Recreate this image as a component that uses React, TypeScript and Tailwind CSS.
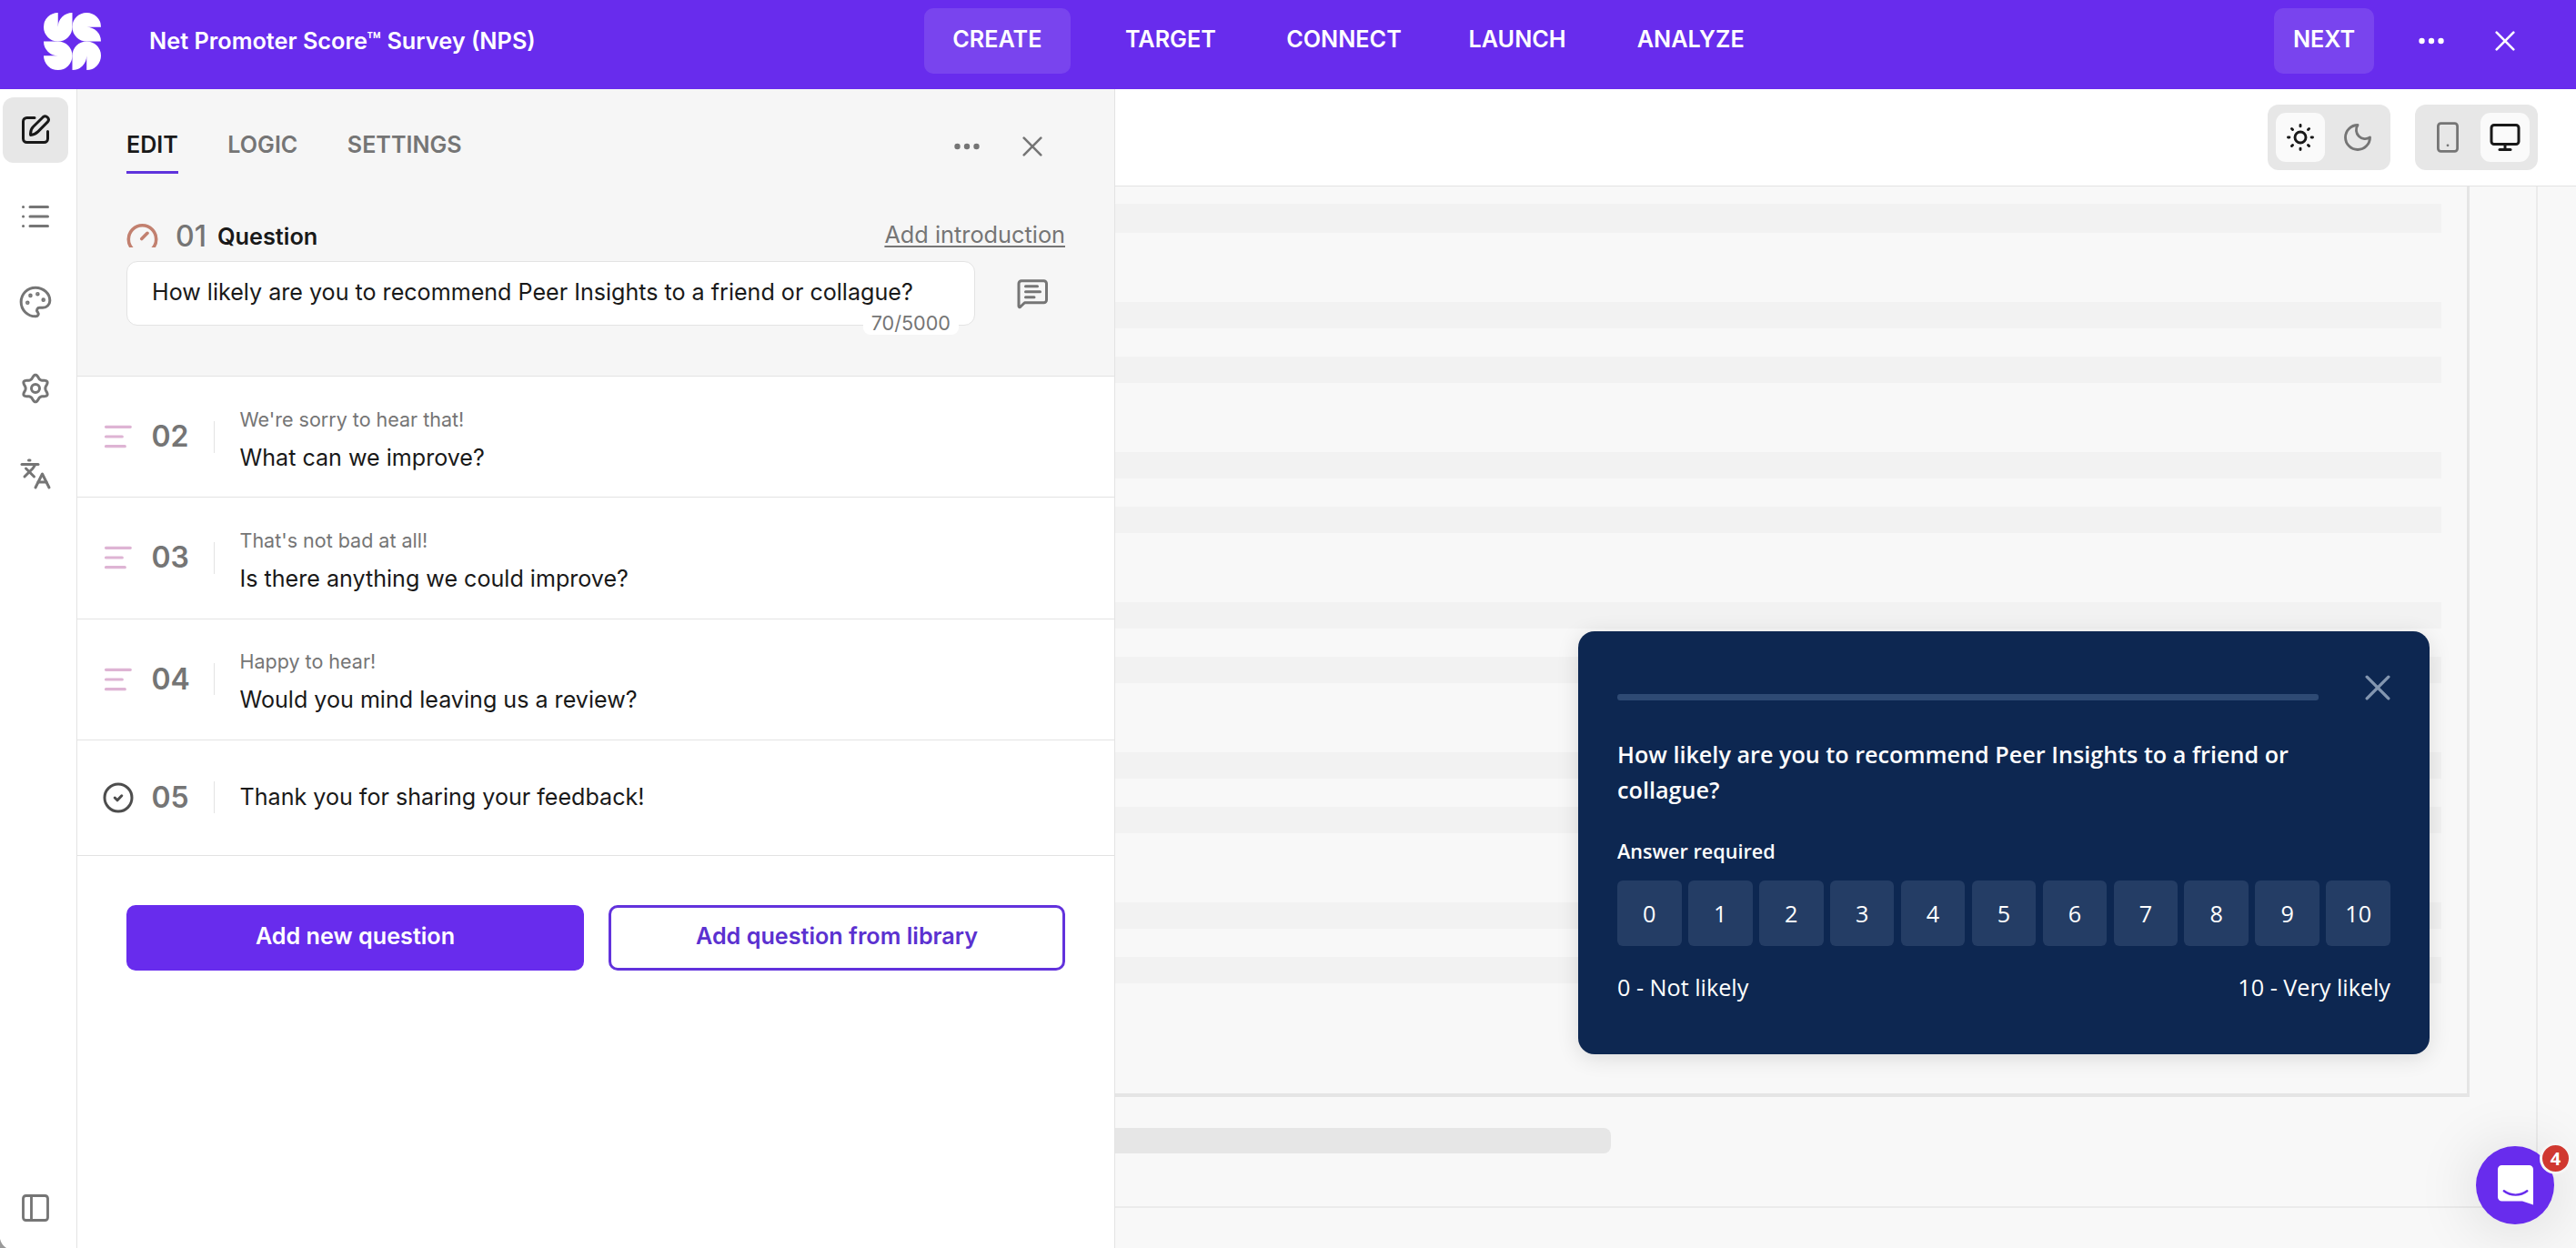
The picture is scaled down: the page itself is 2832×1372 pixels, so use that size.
import React, { useState } from 'react';
import { Languages, Monitor, Palette, PanelLeft } from 'lucide-react';
import clsx from 'clsx';

interface Question {
  id: string;
  intro?: string;
  title: string;
  kind: 'text' | 'end';
}

const questions: Question[] = [
  { id: '02', intro: "We're sorry to hear that!", title: 'What can we improve?', kind: 'text' },
  { id: '03', intro: "That's not bad at all!", title: 'Is there anything we could improve?', kind: 'text' },
  { id: '04', intro: 'Happy to hear!', title: 'Would you mind leaving us a review?', kind: 'text' },
  { id: '05', title: 'Thank you for sharing your feedback!', kind: 'end' },
];

const steps = ['CREATE', 'TARGET', 'CONNECT', 'LAUNCH', 'ANALYZE'];
const tabs = ['EDIT', 'LOGIC', 'SETTINGS'];
const scores = [0, 1, 2, 3, 4, 5, 6, 7, 8, 9, 10];

const petal = 'M16 0A16 16 0 0 0 0 16A16 16 0 0 0 16 32A16 16 0 0 0 32 16V0A16 16 0 0 0 16 16Z';

const Logo = () => (
  <svg className="h-[63px] w-[63px]" viewBox="0 0 64 64" fill="white">
    <path d={petal} />
    <path d={petal} transform="translate(64 0) rotate(90)" />
    <path d={petal} transform="translate(64 64) rotate(180)" />
    <path d={petal} transform="translate(0 64) rotate(270)" />
  </svg>
);

const Dots = ({ className }: { className?: string }) => (
  <svg className={clsx('h-[8px] w-[28px]', className)} viewBox="0 0 28 8" fill="currentColor">
    <circle cx="3.5" cy="4" r="3.2" />
    <circle cx="14" cy="4" r="3.2" />
    <circle cx="24.5" cy="4" r="3.2" />
  </svg>
);

const Cross = ({ className }: { className?: string }) => (
  <svg className={className} viewBox="0 0 22 22" fill="none" stroke="currentColor" strokeWidth="2.6" strokeLinecap="round">
    <path d="M1.7 1.7l18.6 18.6M20.3 1.7L1.7 20.3" />
  </svg>
);

const EditIcon = () => (
  <svg className="h-9 w-9" viewBox="0 0 36 36" fill="none" stroke="currentColor" strokeWidth="3" strokeLinecap="round" strokeLinejoin="round">
    <path d="M17 4.500H8.500a4 4 0 0 0-4 4v19a4 4 0 0 0 4 4h19a4 4 0 0 0 4-4V19.500" />
    <path d="M12.600 23.400c-.4-4 .6-6.800 3-9.200L26.300 3.700a3.700 3.700 0 0 1 5.200 5.200L20.900 19.600c-2.400 2.400-4.600 3.600-8.300 3.800Z" />
  </svg>
);

const ListIcon = () => (
  <svg className="h-9 w-9" viewBox="0 0 36 36" fill="none" stroke="currentColor" strokeWidth="3" strokeLinecap="round">
    <path d="M4.500 7.500h.1M4.500 18h.1M4.500 28.500h.1M12 7.500h19.500M12 18h19.500M12 28.500h19.500" />
  </svg>
);

// Six-lobed outline traced around the centre
const gearOutline = Array.from({ length: 120 }, (_, i) => {
  const a = (i / 120) * Math.PI * 2;
  const r = 12.6 + 2 * Math.cos(6 * a) + 0.25 * Math.cos(12 * a);
  return `${(18 + r * Math.sin(a)).toFixed(2)},${(18 - r * Math.cos(a)).toFixed(2)}`;
}).join(' ');

const GearIcon = () => (
  <svg className="h-9 w-9" viewBox="0 0 36 36" fill="none" stroke="currentColor" strokeWidth="3" strokeLinejoin="round">
    <polygon points={gearOutline} />
    <circle cx="18" cy="18" r="4.500" />
  </svg>
);

const GaugeIcon = () => (
  <svg className="mb-[2px] h-[26px] w-[35px] text-[#c2806f]" viewBox="0 0 35 26" fill="none" stroke="currentColor" strokeWidth="3.600">
    <circle cx="17.500" cy="17" r="15.200" />
    <path d="M16.800 16.500l6.200-6.200" strokeLinecap="round" />
  </svg>
);

const LinesIcon = () => (
  <svg className="h-[26px] w-[32px] text-[#deb4d4]" viewBox="0 0 32 26" fill="none" stroke="currentColor" strokeWidth="3.200" strokeLinecap="round">
    <path d="M2.500 2.300h26.800M2.500 13h17.800M2.500 23.700h20.800" />
  </svg>
);

const DoneIcon = () => (
  <svg className="h-[34px] w-[34px] text-[#4d4d4d]" viewBox="0 0 34 34" fill="none" stroke="currentColor" strokeWidth="3" strokeLinecap="round" strokeLinejoin="round">
    <circle cx="17" cy="17" r="15" />
    <path d="M13.200 17l2.800 2.800 4.800-5" />
  </svg>
);

const NoteIcon = () => (
  <svg className="h-[34px] w-[36px]" viewBox="0 0 36 34" fill="none" stroke="currentColor" strokeWidth="3" strokeLinecap="round" strokeLinejoin="round">
    <path d="M3 28.500V5.800A3 3 0 0 1 6 2.800h24.500a3 3 0 0 1 3 3v17.900a3 3 0 0 1-3 3H9.500L4.800 31.300C4 32 3 31.500 3 30.500Z" />
    <path d="M10.500 8.800h13M10.500 14.800h16M10.500 20.800h9.500" />
  </svg>
);

const SunIcon = () => (
  <svg className="h-9 w-9" viewBox="0 0 36 36" fill="none" stroke="currentColor" strokeWidth="2.900" strokeLinecap="round">
    <circle cx="18" cy="18" r="6" />
    <path d="M18 4.500v1.400M18 30.100v1.400M4.500 18h1.400M30.100 18h1.400M8.500 8.500l1 1M26.500 26.500l1 1M8.500 27.500l1-1M26.500 9.500l1-1" />
  </svg>
);

const MoonIcon = () => (
  <svg className="h-9 w-9" viewBox="0 0 24 24" fill="none" stroke="currentColor" strokeWidth="1.900" strokeLinejoin="round">
    <path d="M12 3a6.500 6.500 0 0 0 9 9 9 9 0 1 1-9-9Z" />
  </svg>
);

const TabletIcon = () => (
  <svg className="h-9 w-9" viewBox="0 0 36 36" fill="none" stroke="currentColor" strokeWidth="2.800" strokeLinecap="round">
    <rect x="7.400" y="2.700" width="21.200" height="30.600" rx="3" />
    <path d="M18 26.800h.01" />
  </svg>
);

const ChatIcon = () => (
  <svg className="ml-[2px] h-[44px] w-[40px]" viewBox="0 0 40 44">
    <path d="M4.500 0h30A4.500 4.500 0 0 1 39 4.500V43.500L27 39.500H4.500A4.500 4.500 0 0 1 0 35V4.500A4.500 4.500 0 0 1 4.500 0Z" fill="white" />
    <path d="M6.800 28.300c7.500 5.800 18 5.800 25.500 0" fill="none" stroke="#682ced" strokeWidth="2.400" strokeLinecap="round" />
  </svg>
);

const Header = () => (
  <header className="flex h-[98px] items-start bg-[#682ced] text-white">
    <div className="flex w-[1001px] items-center pt-[14px] pl-[48px]">
      <Logo />
      <h1 className="mb-[2px] ml-[53px] text-[25.3px] font-semibold whitespace-nowrap">Net Promoter Score™ Survey (NPS)</h1>
    </div>
    <nav className="grid grid-cols-5 pt-[9px] text-[25.2px] font-semibold">
      {steps.map((step, i) => (
        <div key={step} className="flex w-[190.600px] justify-center">
          <button
            className={clsx(
              'flex h-[72px] w-[161px] items-center justify-center rounded-[10px] pb-[2px]',
              i === 0 && 'bg-[#7944ee]'
            )}
          >
            {step}
          </button>
        </div>
      ))}
    </nav>
    <div className="ml-auto flex items-center pt-[9px] pr-[67px]">
      <button className="flex h-[72px] w-[110px] items-center justify-center rounded-[10px] bg-[#7944ee] pb-[2px] text-[25.2px] font-semibold">
        NEXT
      </button>
      <Dots className="ml-[49px]" />
      <Cross className="ml-[56px] h-[22px] w-[22px]" />
    </div>
  </header>
);

const Sidebar = () => (
  <aside className="flex w-[85px] shrink-0 flex-col border-r border-[#e3e3e3] bg-white pt-[9px] pb-[26px] pl-[3px] text-[#757575]">
    <button className="flex h-[72px] w-[72px] items-center justify-center rounded-[12px] bg-[#e7e7e7] text-[#191919]">
      <EditIcon />
    </button>
    <div className="mt-[41px] flex w-[72px] flex-col items-center gap-[58.300px]">
      <ListIcon />
      <Palette size={38} strokeWidth={1.9} className="-my-px" />
      <GearIcon />
      <Languages size={36} strokeWidth={2} />
    </div>
    <div className="mt-auto flex w-[72px] justify-center">
      <PanelLeft size={36} strokeWidth={1.9} />
    </div>
  </aside>
);

const QuestionEditor = () => (
  <div className="h-[316px] border-b border-[#e3e3e3] bg-[#f6f6f6] pr-[54px] pl-[54px]">
    <div className="flex h-[93px] items-end justify-between">
      <div className="flex gap-[54.500px] text-[25.100px] font-semibold">
        {tabs.map((tab, i) => (
          <button
            key={tab}
            className={clsx(
              'h-[49px] border-b-[3px] pb-[12px] leading-[34px]',
              i === 0 ? 'border-[#5f33dc] text-[#191919]' : 'border-transparent text-[#757575]'
            )}
          >
            {tab}
          </button>
        ))}
      </div>
      <div className="mb-[19px] flex items-center text-[#757575]">
        <Dots />
        <Cross className="mr-[25px] ml-[47px] h-[22px] w-[22px]" />
      </div>
    </div>

    <div className="mt-[49px] flex h-[40px] items-center">
      <GaugeIcon />
      <span className="ml-[19px] text-[32px] font-medium text-[#757575]">01</span>
      <span className="ml-[12px] text-[25.300px] font-semibold text-[#191919]">Question</span>
      <a className="mb-[5px] ml-auto text-[25.300px] text-[#757575] underline decoration-2 underline-offset-[3px]">Add introduction</a>
    </div>

    <div className="mt-[7px] flex items-center">
      <div className="relative flex h-[71px] w-[933px] items-center rounded-[12px] border border-[#e3e3e3] bg-white pb-px pl-[27px] text-[25.100px] whitespace-nowrap text-[#191919]">
        How likely are you to recommend Peer Insights to a friend or collague?
        <span className="absolute right-[17px] -bottom-[11px] rounded-[8px] bg-white px-[9px] text-[21.600px] leading-[26px] text-[#757575]">
          70/5000
        </span>
      </div>
      <div className="mt-px ml-[45px] text-[#757575]">
        <NoteIcon />
      </div>
    </div>
  </div>
);

const QuestionRow = ({ question }: { question: Question }) => (
  <div
    className={clsx(
      'flex items-center border-b border-[#e3e3e3] pl-[27px]',
      question.kind === 'end' ? 'h-[127px]' : 'h-[133.300px]'
    )}
  >
    <div className="flex w-[36px] justify-center">{question.kind === 'end' ? <DoneIcon /> : <LinesIcon />}</div>
    <span className="ml-[18.500px] w-[54.500px] text-[32px] font-semibold text-[#757575]">{question.id}</span>
    <div className="ml-[14px] h-[35px] w-px bg-[#e3e3e3]" />
    <div className={clsx('ml-[27.500px]', question.intro && 'pt-[4px]')}>
      {question.intro && <p className="text-[21.500px] leading-[42px] text-[#757575]">{question.intro}</p>}
      <p className="text-[25.100px] leading-[43px] text-[#191919]">{question.title}</p>
    </div>
  </div>
);

const Popup = () => (
  <div className="absolute top-[489px] left-[509px] h-[465px] w-[936px] rounded-[18px] bg-[#0d2751] px-[43px] font-['Open_Sans',sans-serif] text-[25.200px] text-white shadow-[0_4px_24px_rgba(0,0,0,0.12)]">
    <div className="flex h-[76px] items-end justify-between">
      <div className="h-[7px] w-[771px] rounded-[3px] bg-[#2e4a74]" />
      <Cross className="h-[28px] w-[28px] text-[#8396b0]" />
    </div>
    <p className="mt-[40px] leading-[39px] font-semibold">
      How likely are you to recommend Peer Insights to a friend or<br />collague?
    </p>
    <p className="mt-[33px] text-[21.600px] leading-[30px] font-semibold">Answer required</p>
    <div className="mt-[17px] grid grid-cols-11 gap-[7.300px]">
      {scores.map((score) => (
        <button key={score} className="flex h-[72px] items-center justify-center rounded-[6px] bg-[#243d65] pt-[2px]">
          {score}
        </button>
      ))}
    </div>
    <div className="mt-[27px] flex justify-between leading-[36px]">
      <span>0 - Not likely</span>
      <span>10 - Very likely</span>
    </div>
  </div>
);

const Preview = () => (
  <section className="flex min-w-0 flex-1 flex-col bg-[#f8f8f8]">
    <div className="flex h-[107px] items-start justify-end gap-[27px] border-b border-[#e3e3e3] bg-white pt-[17px] pr-[42px] text-[#757575]">
      <div className="flex h-[72px] w-[135px] items-center gap-[18px] rounded-[12px] bg-[#e7e7e7] pl-[9px]">
        <div className="flex h-[54px] w-[54px] items-center justify-center rounded-[11px] bg-[#fafafa] text-[#191919]">
          <SunIcon />
        </div>
        <MoonIcon />
      </div>
      <div className="flex h-[72px] w-[135px] items-center justify-between rounded-[12px] bg-[#e7e7e7] pr-[9px] pl-[18px]">
        <TabletIcon />
        <div className="flex h-[54px] w-[54px] items-center justify-center rounded-[11px] bg-[#fafafa] text-[#191919]">
          <Monitor size={36} strokeWidth={2} />
        </div>
      </div>
    </div>

    <div className="relative h-[1123px] w-[1564px] border-r-2 border-b-2 border-[#ebebeb]">
      <div className="flex h-[1001px] w-[1489px] flex-col gap-[76px] border-r-3 border-b-4 border-[#e5e5e5] pt-[19px] pr-[28px]">
        <div className="h-[32px] bg-[#f2f2f2]" />
        {[0, 1, 2, 3, 4].map((n) => (
          <div key={n} className="flex flex-col gap-[31px]">
            <div className="h-[29px] bg-[#f2f2f2]" />
            <div className="h-[29px] bg-[#f2f2f2]" />
          </div>
        ))}
      </div>
      <div className="mt-[34px] h-[28px] w-[545px] rounded-r-[8px] bg-[#e6e6e6]" />
      <Popup />
    </div>
  </section>
);

const ChatLauncher = () => (
  <button className="absolute top-[1260px] left-[2722px] flex h-[86px] w-[86px] items-center justify-center rounded-full bg-[#682ced] shadow-[0_4px_70px_rgba(0,0,0,0.14)]">
    <ChatIcon />
    <span className="absolute top-[-4px] right-[-19px] flex h-[35px] w-[35px] items-center justify-center rounded-full border-3 border-[#f6f6f6] bg-[#d03830] font-['Open_Sans',sans-serif] text-[20px] font-bold text-white">
      4
    </span>
  </button>
);

export default function App() {
  const [rows] = useState<Question[]>(questions);

  return (
    <div className="relative flex h-[1372px] w-[2832px] flex-col overflow-hidden bg-white font-['Inter',sans-serif]">
      <Header />
      <main className="flex min-h-0 flex-1">
        <Sidebar />
        <section className="w-[1141px] shrink-0 border-r border-[#e3e3e3] bg-white">
          <QuestionEditor />
          {rows.map((row) => (
            <QuestionRow key={row.id} question={row} />
          ))}
          <div className="flex gap-[27px] pt-[54px] pl-[54px] text-[25.200px] font-semibold">
            <button className="h-[72px] w-[503px] rounded-[10px] bg-[#682ced] pb-[2px] text-white">Add new question</button>
            <button className="h-[72px] w-[502px] rounded-[10px] border-3 border-[#6232dc] pb-[2px] text-[#5b31d0]">
              Add question from library
            </button>
          </div>
        </section>
        <Preview />
      </main>
      <ChatLauncher />
      {/* rounded window corner */}
      <svg className="absolute bottom-0 left-0 h-[10px] w-[7px]" viewBox="0 0 7 10" fill="#9a9a9a">
        <path d="M0 0Q1.500 6.500 7 10H0Z" />
      </svg>
    </div>
  );
}
